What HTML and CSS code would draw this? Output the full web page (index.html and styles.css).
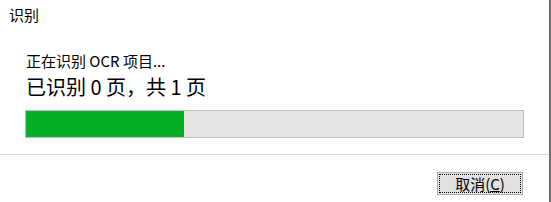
FILE: index.html
```html
<!DOCTYPE html>
<html lang="zh-CN">
<head>
    <meta charset="UTF-8">
    <title>识别</title>
    <link rel="stylesheet" href="styles.css">
</head>
<body>
    <div class="dialog">
        <div class="title">识别</div>
        <div class="content">
            <div class="message">正在识别 OCR 项目...</div>
            <div class="count">已识别 0 页，共 1 页</div>
            <div class="progress">
                <div class="progress-fill" style="width: 31.8%"></div>
            </div>
        </div>
        <div class="separator"></div>
        <div class="footer">
            <button class="btn">取消(<u>C</u>)</button>
        </div>
    </div>
</body>
</html>
```

FILE: styles.css
```css
body {
    margin: 0;
    background: #fff;
    font-family: "Noto Sans CJK SC", "Noto Sans", sans-serif;
    color: #000;
}

.dialog {
    width: 549px;
    height: 202px;
    border-right: 2px solid #6e6e6e;
    background: #fff;
}

.title {
    padding: 5px 9px 0;
    font-size: 15px;
    line-height: 20px;
}

.content {
    padding: 26px 25px 0 25px;
}

.message {
    padding-left: 1px;
    font-size: 15px;
    line-height: 20px;
}

.count {
    margin-top: 2px;
    padding-left: 1px;
    font-size: 20px;
    line-height: 28px;
}

.progress {
    margin-top: 9px;
    height: 26px;
    border: 1px solid #bcbcbc;
    background: #e6e6e6;
}

.progress-fill {
    height: 100%;
    background: #06b025;
}

.separator {
    margin-top: 16px;
    height: 1px;
    background: #d5dade;
}

.footer {
    display: flex;
    justify-content: flex-end;
    padding: 17px 26px 0 0;
}

.btn {
    width: 86px;
    height: 23px;
    padding: 0;
    border: 1px solid #adadad;
    background: #e1e1e1;
    outline: 1px dotted #000;
    outline-offset: -3px;
    font-family: inherit;
    font-size: 15px;
    line-height: 20px;
    color: #000;
}
```
